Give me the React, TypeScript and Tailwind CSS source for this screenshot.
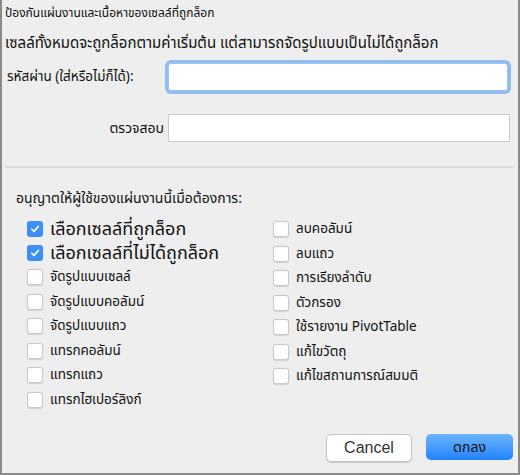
import React from "react";

const font = { fontFamily: '"Noto Sans Thai", "Noto Sans", "Liberation Sans", sans-serif' };

function Box({ checked }: { checked?: boolean }) {
  if (checked) {
    return (
      <span className="flex h-[16px] w-[16px] shrink-0 items-center justify-center rounded-[3px] bg-[#3d8ef7]">
        <svg width="10" height="10" viewBox="0 0 10 10">
          <path d="M1.8 5.2 L4 7.4 L8.4 2.4" fill="none" stroke="#ffffff" strokeWidth="1.6" strokeLinecap="round" strokeLinejoin="round" />
        </svg>
      </span>
    );
  }
  return (
    <span className="h-[16px] w-[16px] shrink-0 rounded-[3px] border border-[#c9c9c9] bg-white shadow-[0_0.5px_1px_rgba(0,0,0,0.12)]" />
  );
}

function Item({ label, checked, big }: { label: string; checked?: boolean; big?: boolean }) {
  return (
    <div className={big ? "flex h-[24px] items-center gap-[7px]" : "flex h-[24.5px] items-center gap-[7px]"}>
      <Box checked={checked} />
      <span className={big ? "text-[18px] leading-[21px] text-[#111]" : "text-[13.5px] leading-[20px] text-[#111]"}>{label}</span>
    </div>
  );
}

export default function App() {
  const left = [
    { l: "เลือกเซลล์ที่ถูกล็อก", c: true, b: true },
    { l: "เลือกเซลล์ที่ไม่ได้ถูกล็อก", c: true, b: true },
    { l: "จัดรูปแบบเซลล์" },
    { l: "จัดรูปแบบคอลัมน์" },
    { l: "จัดรูปแบบแถว" },
    { l: "แทรกคอลัมน์" },
    { l: "แทรกแถว" },
    { l: "แทรกไฮเปอร์ลิงก์" },
  ];
  const right = [
    "ลบคอลัมน์",
    "ลบแถว",
    "การเรียงลำดับ",
    "ตัวกรอง",
    "ใช้รายงาน PivotTable",
    "แก้ไขวัตถุ",
    "แก้ไขสถานการณ์สมมติ",
  ];
  return (
    <div style={font} className="h-[475px] w-[520px] border-x-2 border-b-2 border-[#8a8a8a] bg-[#eeeeee] text-[#111]">
      <div className="pl-[3px] pt-[4px] text-[12px] leading-[18px]">ป้องกันแผ่นงานและเนื้อหาของเซลล์ที่ถูกล็อก</div>
      <div className="mt-[13px] pl-[3px] text-[15px] leading-[18px]">เซลล์ทั้งหมดจะถูกล็อกตามค่าเริ่มต้น แต่สามารถจัดรูปแบบเป็นไม่ได้ถูกล็อก</div>
      <div className="mt-[10px] flex items-center">
        <span className="w-[166px] pl-[5px] text-[13.5px]">รหัสผ่าน (ใส่หรือไม่ก็ได้):</span>
        <div className="h-[28px] w-[340px] rounded-[3px] border border-[#9cc3f2] bg-white shadow-[0_0_0_3px_#90bdf0]" />
      </div>
      <div className="mt-[23px] flex items-center">
        <span className="w-[166px] pr-[4px] text-right text-[14px]">ตรวจสอบ</span>
        <div className="h-[28px] w-[342px] border border-[#c9c9c9] bg-white" />
      </div>
      <div className="ml-[3px] mr-[5px] mt-[24px] h-[2px] bg-[#dcdcdc]" />
      <div className="mt-[22px] pl-[14px] text-[14px] leading-[18px]">อนุญาตให้ผู้ใช้ของแผ่นงานนี้เมื่อต้องการ:</div>
      <div className="mt-[9px] flex pl-[25px]">
        <div className="flex w-[246px] flex-col">
          {left.map((it) => (
            <Item key={it.l} label={it.l} checked={it.c} big={it.b} />
          ))}
        </div>
        <div className="flex flex-col">
          {right.map((l) => (
            <Item key={l} label={l} />
          ))}
        </div>
      </div>
      <div className="mt-[22px] flex justify-end gap-[14px] pr-[5px]">
        <button className="h-[28px] w-[86px] rounded-[5px] border border-[#c6c6c6] bg-white text-[16px] text-[#333] shadow-[0_1px_1px_rgba(0,0,0,0.15)]" style={{ fontFamily: '"Liberation Sans", sans-serif' }}>
          Cancel
        </button>
        <button className="h-[26px] w-[87px] rounded-[5px] bg-gradient-to-b from-[#6cb4fb] to-[#1c82fb] text-[14px] text-[#111]">
          ตกลง
        </button>
      </div>
    </div>
  );
}
